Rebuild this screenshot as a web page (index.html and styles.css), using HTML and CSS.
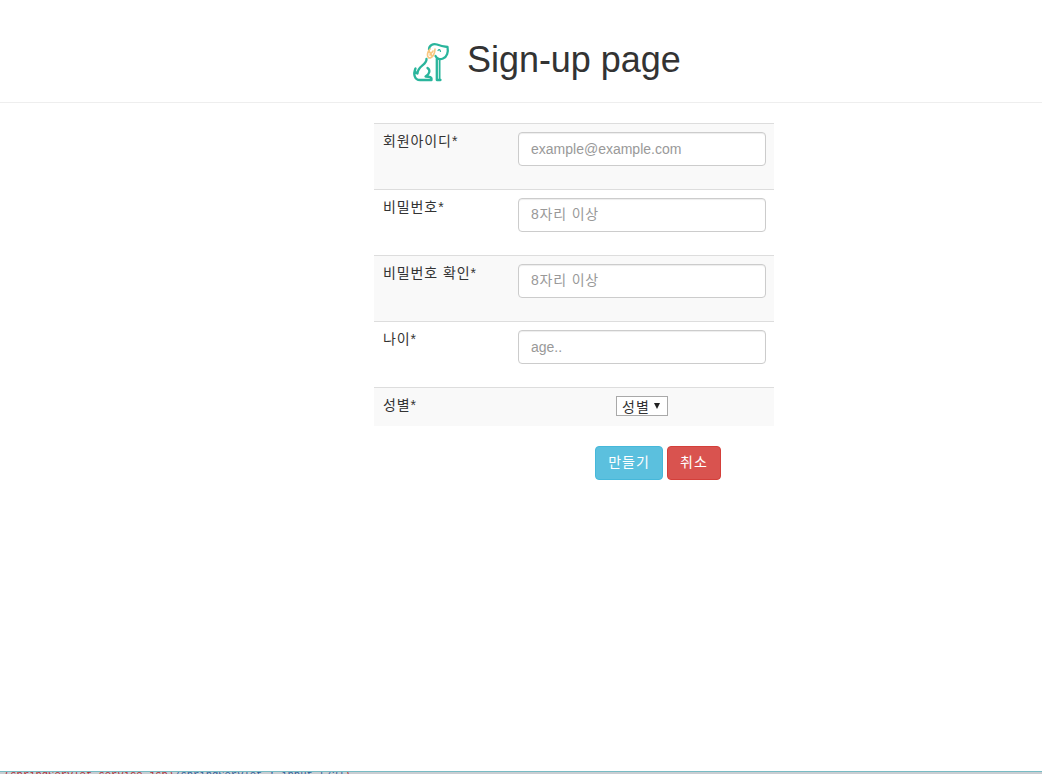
FILE: index.html
```html
<!DOCTYPE html>
<html lang="ko">
<head>
<meta charset="utf-8">
<title>Sign-up page</title>
<link rel="stylesheet" href="styles.css">
</head>
<body>
<header class="page-header">
  <svg class="logo" viewBox="0 0 52 52" fill="none" stroke="#2ab59c" stroke-width="2.3" stroke-linecap="round" stroke-linejoin="round">
    <path d="M24 13.500C24 9 28 7.500 32 8.500C36 10 39 10.500 42.500 11C43.500 16 42 21 38 22.500C35 24 32 23 30.500 20"/>
    <path d="M31.800 23V44H35.500"/>
    <path d="M34.600 24.500V43" stroke-width="1.800"/>
    <path d="M21.500 23C22 29 12.500 30 12.500 37.500C10 37 9.500 34.500 10.500 32.500C8 38 9.500 44 15 44H26.500C27 41 24.500 40.500 20.500 40.500C25 38 25.500 34 22.500 32"/>
    <path d="M33 14.500C34 13 35 13.300 35.500 15.500" stroke-width="1.200"/>
    <path d="M25 13C23 15 21 20 24 22C28 22 30 17 30 13M24 15L27 20M28 15L25 19" stroke="#f8c780" stroke-width="1.600"/>
  </svg>
  <h1 class="title">Sign-up page</h1>
</header>
<main>
  <form class="signup">
    <div class="row"><label class="label">회원아이디<span class="star">*</span></label><input class="field" type="text" placeholder="example@example.com"></div>
    <div class="row"><label class="label">비밀번호<span class="star">*</span></label><input class="field ko" type="text" placeholder="8자리 이상"></div>
    <div class="row"><label class="label">비밀번호 확인<span class="star">*</span></label><input class="field ko" type="text" placeholder="8자리 이상"></div>
    <div class="row"><label class="label">나이<span class="star">*</span></label><input class="field" type="text" placeholder="age.."></div>
    <div class="row last"><label class="label">성별<span class="star">*</span></label><div class="choice"><button class="select" type="button"><span>성별</span><svg width="6" height="6" viewBox="0 0 6 6"><path d="M0 0H6L3 6Z" fill="#222"/></svg></button></div></div>
    <div class="actions"><button class="btn create" type="button">만들기</button><button class="btn cancel" type="button">취소</button></div>
  </form>
</main>
<footer class="strip"><span class="code">(springServlet-service.jsp)</span><span class="code blue">/springServlet : input [72]</span><span class="code">)</span></footer>
</body>
</html>
```
FILE: styles.css
```css
* { box-sizing: border-box; }
body {
  margin: 0;
  height: 774px;
  display: flex;
  flex-direction: column;
  overflow: hidden;
  background: #fff;
  color: #333;
  font: 14px/20px "Liberation Sans", "Noto Sans CJK KR", sans-serif;
}
.page-header {
  display: flex;
  height: 103px;
  padding: 36px 0 0 405px;
  border-bottom: 1px solid #eee;
}
.logo { width: 52px; height: 52px; }
.title {
  margin: 4px 0 0 10px;
  font-size: 36px;
  font-weight: 500;
  line-height: 40px;
  letter-spacing: -.04px;
}
main { flex: 1; }
.signup { width: 400px; margin: 20px 0 0 374px; }
.row {
  display: flex;
  height: 66px;
  padding: 8px 8px 0 9px;
  border-top: 1px solid #ddd;
}
.row:nth-child(odd) { background: #f9f9f9; }
.row.last { height: 39px; }
.label { width: 135px; line-height: 18px; letter-spacing: .9px; }
.star { letter-spacing: 0; }
.field {
  width: 248px;
  height: 34px;
  padding: 6px 12px;
  border: 1px solid #ccc;
  border-radius: 4px;
  background: #fff;
  box-shadow: inset 0 1px 1px rgba(0, 0, 0, .075);
  font: inherit;
}
.field::placeholder { color: #999; opacity: 1; }
.ko { letter-spacing: .8px; padding-bottom: 7px; padding-top: 5px; }
.choice { width: 248px; display: flex; justify-content: center; }
.select {
  display: flex;
  align-items: center;
  gap: 4px;
  width: 52px;
  height: 20px;
  padding: 1px 5px 0;
  border: 1px solid #a9a9a9;
  background: #fff;
  color: #333;
  font: inherit;
  letter-spacing: 1px;
}
.select svg { margin-top: -2px; }
.actions { display: flex; gap: 4px; padding: 20px 0 0 221px; }
.btn {
  height: 34px;
  padding: 0 0 2px;
  border: 1px solid;
  border-radius: 4px;
  color: #fff;
  font: inherit;
  letter-spacing: 1px;
}
.create { width: 68px; background: #5bc0de; border-color: #46b8da; }
.cancel { width: 54px; background: #d9534f; border-color: #d43f3a; }
.strip {
  display: flex;
  height: 3px;
  padding-left: 4px;
  overflow: hidden;
  border-top: 1px solid #78bcc4;
  background: #c9cdd2;
}
.code {
  margin-top: -3px;
  font: 10.5px/12px "Liberation Mono", monospace;
  color: #b03038;
  white-space: pre;
}
.blue { color: #315f9b; }
```
